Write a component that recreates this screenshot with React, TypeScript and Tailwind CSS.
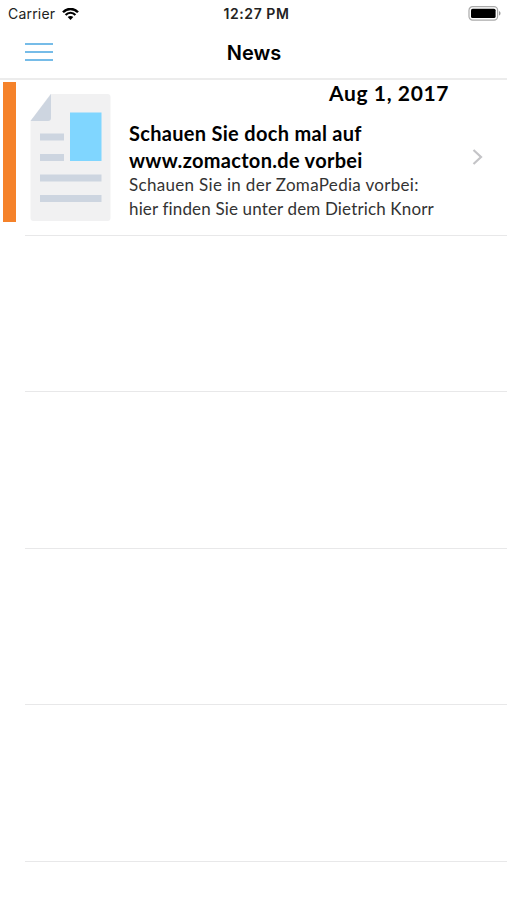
import React from "react";

const StatusBar = () => {
  return (
    <div className="relative h-[27px] flex items-center justify-between pl-[8px] pr-[6px] font-['Inter','Liberation_Sans',sans-serif] text-[#222]">
      <div className="flex items-center gap-[7px]">
        <span className="tracking-[0.2px] text-sm">Carrier</span>
        <svg className="w-[17px] h-3" viewBox="0 0 17 12" fill="none">
          <path d="M1 4.3C5.2-.2 11.8-.2 16 4.3" stroke="#000" strokeWidth="2.4" />
          <path d="M3.6 7C6.3 4 10.7 4 13.4 7" stroke="#000" strokeWidth="2.2" />
          <path d="M8.5 12 5.7 9.1C7.2 7.5 9.8 7.5 11.3 9.1Z" fill="#000" />
        </svg>
      </div>
      <span className="absolute inset-x-0 text-center pl-[6px] text-sm font-semibold tracking-[0.55px]">
        12:27 PM
      </span>
      <svg className="w-[33px] h-[15px]" viewBox="0 0 33 15">
        <rect x="1" y="0.7" width="28.6" height="13.4" rx="3.6" fill="#fff" stroke="#aaa" strokeWidth="1.2" />
        <rect x="3" y="2.7" width="24.6" height="9.4" rx="1.6" fill="#000" />
        <path d="M31 5v4.6c2-.8 2-3.8 0-4.6Z" fill="#999" />
      </svg>
    </div>
  );
};

const NavBar = () => {
  return (
    <header className="relative h-[53px] border-b-2 border-[#ececec] pl-[25px] pt-4">
      <button className="flex flex-col gap-[6px] w-[28px]" aria-label="Menu">
        <span className="h-[2px] w-full bg-[#76bce8]" />
        <span className="h-[2px] w-full bg-[#76bce8]" />
        <span className="h-[2px] w-full bg-[#76bce8]" />
      </button>
      <h1 className="absolute inset-x-0 top-[12px] pl-[1px] text-center font-['Inter','Liberation_Sans',sans-serif] text-xl leading-7 font-semibold text-black">
        News
      </h1>
    </header>
  );
};

const DocumentIcon = () => {
  return (
    <svg className="w-[81px] h-[128px] shrink-0" viewBox="0 0 81 128">
      <path d="M20.5 0H77.5a3 3 0 0 1 3 3v121a3 3 0 0 1-3 3H3.5a3 3 0 0 1-3-3V27Z" fill="#f1f1f2" />
      <path d="M21 0v24a3 3 0 0 1-3 3H.5Z" fill="#cdd5e0" />
      <path d="M10 39.5h24v7h-24zM10 60h24v7h-24zM10 80.5H71.5v7H10zM10 101H71.5v7H10z" fill="#cdd5e0" />
      <path d="M40 18.5H71.5V67H40z" fill="#80d6ff" />
    </svg>
  );
};

const NewsRow = () => {
  return (
    <article className="h-[154.6px] flex font-['Lato','Liberation_Sans',sans-serif]">
      <div className="ml-[3px] mt-[2px] w-[13px] h-[140px] bg-[#f5822a]" />
      <div className="ml-[14px] mt-[14px]">
        <DocumentIcon />
      </div>
      <div className="ml-[18px] w-[320px] whitespace-nowrap">
        <p className="text-right text-[21px] leading-[26px] font-bold tracking-[0.6px] text-black">
          Aug 1, 2017
        </p>
        <h2 className="mt-[14px] text-xl leading-[27px] font-bold tracking-[0.3px] text-black">
          Schauen Sie doch mal auf
          <br />
          www.zomacton.de vorbei
        </h2>
        <p className="-mt-px text-[17px] leading-[23.5px] text-[#333]">
          <span className="tracking-[0.32px]">Schauen Sie in der ZomaPedia vorbei:</span>
          <br />
          <span className="tracking-[0.15px]">hier finden Sie unter dem Dietrich Knorr</span>
        </p>
      </div>
      <svg className="ml-[23px] mt-[69px] w-3 h-4" viewBox="0 0 12 16" fill="none">
        <path d="M1.5 1 9 8l-7.5 7" stroke="#c4c4c7" strokeWidth="2.2" />
      </svg>
    </article>
  );
};

const App = () => {
  return (
    <main className="w-[507px] h-[900px] overflow-hidden bg-white">
      <StatusBar />
      <NavBar />
      <NewsRow />
      <div className="ml-[25px]">
        <div className="h-[156.5px] border-t border-[#e8e8e9]" />
        <div className="h-[156.5px] border-t border-[#e8e8e9]" />
        <div className="h-[156.5px] border-t border-[#e8e8e9]" />
        <div className="h-[156.5px] border-t border-[#e8e8e9]" />
        <div className="border-t border-[#e8e8e9]" />
      </div>
    </main>
  );
};

export default App;
